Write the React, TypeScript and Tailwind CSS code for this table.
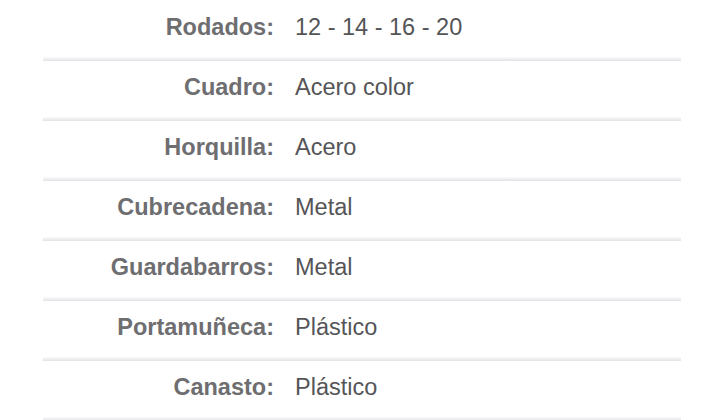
const specs = [
  { label: "Rodados:", value: "12 - 14 - 16 - 20" },
  { label: "Cuadro:", value: "Acero color" },
  { label: "Horquilla:", value: "Acero" },
  { label: "Cubrecadena:", value: "Metal" },
  { label: "Guardabarros:", value: "Metal" },
  { label: "Portamuñeca:", value: "Plástico" },
  { label: "Canasto:", value: "Plástico" },
]

export default function App() {
  return (
    <div className="w-[720px] h-[420px] overflow-hidden bg-white font-['Liberation_Sans',Arial,sans-serif]">
      <div className="ml-[43px] w-[638px] pt-[1px]">
        {specs.map((s) => (
          <div key={s.label}>
            <div className="flex items-center h-[56px] pb-[2px]">
              <div className="w-[231px] text-right font-bold text-[23.5px] text-[#6e6e71]">{s.label}</div>
              <div className="pl-[21px] text-[23.5px] text-[#555558]">{s.value}</div>
            </div>
            <div className="h-[4px] bg-gradient-to-b from-[#fafafb] to-[#e3e3e7]" />
          </div>
        ))}
      </div>
    </div>
  )
}
